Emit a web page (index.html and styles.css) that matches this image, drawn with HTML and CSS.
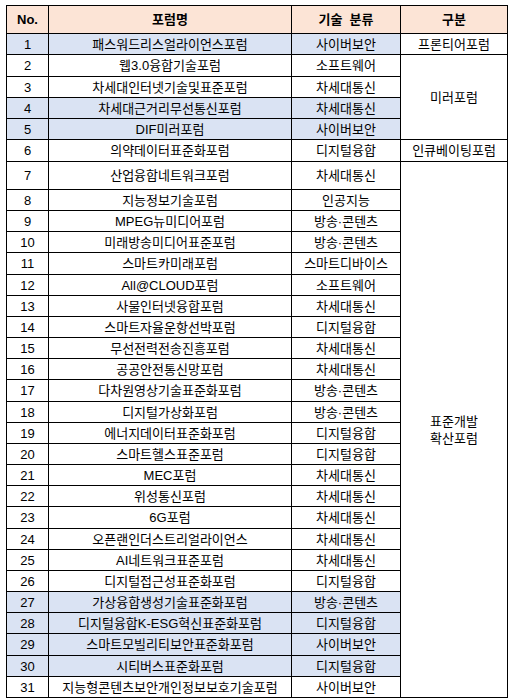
FILE: index.html
```html
<!DOCTYPE html>
<html lang="ko">
<head>
<meta charset="utf-8">
<title>포럼 목록</title>
<link rel="stylesheet" href="styles.css">
</head>
<body>
<table class="forum-table">
  <colgroup>
    <col class="c-no"><col class="c-name"><col class="c-tech"><col class="c-type">
  </colgroup>
  <thead>
    <tr class="head-row"><th>No.</th><th>포럼명</th><th>기술&nbsp; 분류</th><th>구분</th></tr>
  </thead>
  <tbody>
    <tr class="r21 hl"><td>1</td><td>패스워드리스얼라이언스포럼</td><td>사이버보안</td><td class="type">프론티어포럼</td></tr>
    <tr class="r22"><td>2</td><td>웹3.0융합기술포럼</td><td>소프트웨어</td><td class="type" rowspan="4">미러포럼</td></tr>
    <tr class="r21"><td>3</td><td>차세대인터넷기술및표준포럼</td><td>차세대통신</td></tr>
    <tr class="r21 hl"><td>4</td><td>차세대근거리무선통신포럼</td><td>차세대통신</td></tr>
    <tr class="r21 hl"><td>5</td><td>DIF미러포럼</td><td>사이버보안</td></tr>
    <tr class="r22"><td>6</td><td>의약데이터표준화포럼</td><td>디지털융합</td><td class="type">인큐베이팅포럼</td></tr>
    <tr class="r28"><td>7</td><td>산업융합네트워크포럼</td><td>차세대통신</td><td class="type" rowspan="25">표준개발<br>확산포럼</td></tr>
    <tr class="r21"><td>8</td><td>지능정보기술포럼</td><td>인공지능</td></tr>
    <tr class="r21"><td>9</td><td>MPEG뉴미디어포럼</td><td>방송·콘텐츠</td></tr>
    <tr class="r21"><td>10</td><td>미래방송미디어표준포럼</td><td>방송·콘텐츠</td></tr>
    <tr class="r22"><td>11</td><td>스마트카미래포럼</td><td>스마트디바이스</td></tr>
    <tr class="r21"><td>12</td><td>All@CLOUD포럼</td><td>소프트웨어</td></tr>
    <tr class="r21"><td>13</td><td>사물인터넷융합포럼</td><td>차세대통신</td></tr>
    <tr class="r21"><td>14</td><td>스마트자율운항선박포럼</td><td>디지털융합</td></tr>
    <tr class="r21"><td>15</td><td>무선전력전송진흥포럼</td><td>차세대통신</td></tr>
    <tr class="r21"><td>16</td><td>공공안전통신망포럼</td><td>차세대통신</td></tr>
    <tr class="r22"><td>17</td><td>다차원영상기술표준화포럼</td><td>방송·콘텐츠</td></tr>
    <tr class="r21"><td>18</td><td>디지털가상화포럼</td><td>방송·콘텐츠</td></tr>
    <tr class="r21"><td>19</td><td>에너지데이터표준화포럼</td><td>디지털융합</td></tr>
    <tr class="r21"><td>20</td><td>스마트헬스표준포럼</td><td>디지털융합</td></tr>
    <tr class="r21"><td>21</td><td>MEC포럼</td><td>차세대통신</td></tr>
    <tr class="r21"><td>22</td><td>위성통신포럼</td><td>차세대통신</td></tr>
    <tr class="r22"><td>23</td><td>6G포럼</td><td>차세대통신</td></tr>
    <tr class="r21"><td>24</td><td>오픈랜인더스트리얼라이언스</td><td>차세대통신</td></tr>
    <tr class="r21"><td>25</td><td>AI네트워크표준포럼</td><td>차세대통신</td></tr>
    <tr class="r21"><td>26</td><td>디지털접근성표준화포럼</td><td>디지털융합</td></tr>
    <tr class="r21 hl"><td>27</td><td>가상융합생성기술표준화포럼</td><td>방송·콘텐츠</td></tr>
    <tr class="r21 hl"><td>28</td><td>디지털융합K-ESG혁신표준화포럼</td><td>디지털융합</td></tr>
    <tr class="r22 hl"><td>29</td><td>스마트모빌리티보안표준화포럼</td><td>사이버보안</td></tr>
    <tr class="r21 hl"><td>30</td><td>시티버스표준화포럼</td><td>디지털융합</td></tr>
    <tr class="r21"><td>31</td><td>지능형콘텐츠보안개인정보보호기술포럼</td><td>사이버보안</td></tr>
  </tbody>
</table>
</body>
</html>
```

FILE: styles.css
```css
html, body {
  margin: 0;
  padding: 0;
  background: #ffffff;
}

body {
  padding: 5px 0 0 6px;
  font-family: "Liberation Sans", "Noto Sans CJK KR", sans-serif;
  color: #000000;
}

.forum-table {
  border-collapse: collapse;
  table-layout: fixed;
  width: 501px;
  font-size: 13px;
  letter-spacing: 0;
}

.c-no { width: 42px; }
.c-name { width: 243px; }
.c-tech { width: 109px; }
.c-type { width: 107px; }

.forum-table th,
.forum-table td {
  border: 1px solid #000000;
  padding: 0 1px;
  text-align: center;
  vertical-align: middle;
  line-height: 17px;
  white-space: nowrap;
  overflow: hidden;
}

.forum-table th {
  font-weight: bold;
  background: #fce4d6;
}

.head-row { height: 28px; }
.r21 { height: 21px; }
.r22 { height: 22px; }
.r28 { height: 28px; }

.hl td { background: #dae3f3; }
.forum-table td.type { background: #ffffff; }
```
